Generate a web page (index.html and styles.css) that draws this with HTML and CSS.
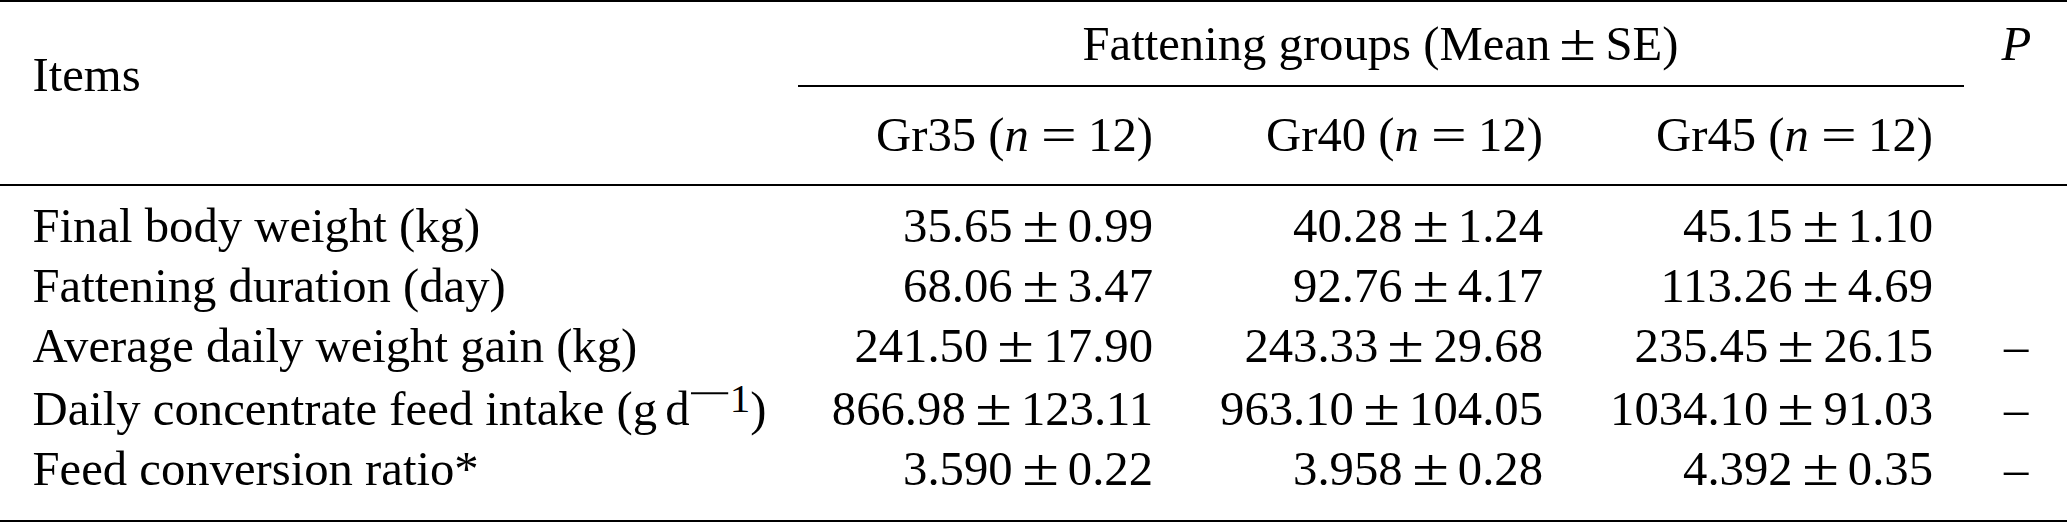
FILE: index.html
```html
<!DOCTYPE html>
<html lang="en">
<head>
<meta charset="utf-8">
<title>Fattening groups table</title>
<link rel="stylesheet" href="styles.css">
</head>
<body>
<div class="tbl">
  <div class="thead">
    <div class="cell left items">Items</div>
    <div class="cell grp">Fattening groups (Mean<span class="pm">±</span>SE)</div>
    <div class="cell ctr phead"><i>P</i></div>
    <div class="cell num sub">Gr35 (<i>n</i><span class="eq">=</span>12)</div>
    <div class="cell num sub">Gr40 (<i>n</i><span class="eq">=</span>12)</div>
    <div class="cell num sub">Gr45 (<i>n</i><span class="eq">=</span>12)</div>
    <div class="cell ctr sub"></div>
  </div>
  <div class="tbody">
    <div class="cell left">Final body weight (kg)</div>
    <div class="cell num">35.65<span class="pm">±</span>0.99</div>
    <div class="cell num">40.28<span class="pm">±</span>1.24</div>
    <div class="cell num">45.15<span class="pm">±</span>1.10</div>
    <div class="cell ctr"></div>

    <div class="cell left">Fattening duration (day)</div>
    <div class="cell num">68.06<span class="pm">±</span>3.47</div>
    <div class="cell num">92.76<span class="pm">±</span>4.17</div>
    <div class="cell num">113.26<span class="pm">±</span>4.69</div>
    <div class="cell ctr"></div>

    <div class="cell left">Average daily weight gain (kg)</div>
    <div class="cell num">241.50<span class="pm">±</span>17.90</div>
    <div class="cell num">243.33<span class="pm">±</span>29.68</div>
    <div class="cell num">235.45<span class="pm">±</span>26.15</div>
    <div class="cell ctr">–</div>

    <div class="cell left r4">Daily concentrate feed intake (g<span class="thin">d</span><span class="sup"><span class="minus">−</span>1</span>)</div>
    <div class="cell num r4">866.98<span class="pm">±</span>123.11</div>
    <div class="cell num r4">963.10<span class="pm">±</span>104.05</div>
    <div class="cell num r4">1034.10<span class="pm">±</span>91.03</div>
    <div class="cell ctr r4">–</div>

    <div class="cell left">Feed conversion ratio*</div>
    <div class="cell num">3.590<span class="pm">±</span>0.22</div>
    <div class="cell num">3.958<span class="pm">±</span>0.28</div>
    <div class="cell num">4.392<span class="pm">±</span>0.35</div>
    <div class="cell ctr">–</div>
  </div>
</div>
</body>
</html>
```

FILE: styles.css
```css
html, body { margin: 0; padding: 0; background: #fff; }
body { color: #000; }
.tbl {
  width: 2067px;
  display: flex;
  flex-direction: column;
  border-top: 2px solid #000;
  border-bottom: 2px solid #000;
}
.thead, .tbody {
  display: grid;
  grid-template-columns: 795.5px 390px 390px 390px 101.5px;
}
.thead { border-bottom: 2px solid #000; }
.tbody { padding: 10px 0 21px; }
.cell {
  font-family: "Liberation Serif", "Times New Roman", serif;
  font-size: 48.7px;
  line-height: 60px;
  padding: 0 32.5px;
  white-space: nowrap;
}
.left { text-align: left; }
.num { text-align: right; }
.ctr { text-align: center; padding: 0; }
.items { grid-row: 1 / span 2; padding-top: 42.6px; }
.grp {
  grid-column: 2 / span 3;
  margin: 0 2px;
  padding: 11.6px 0 11.4px;
  border-bottom: 2px solid #000;
  text-align: center;
}
.phead { padding-top: 11.6px; }
.sub { padding-top: 17.6px; padding-bottom: 19.4px; }
.r4 { padding-top: 3px; }
.pm {
  display: inline-block;
  font-size: 1.1em;
  line-height: 1;
  transform: scaleX(1.25);
  margin: 0 12.9px;
}
.eq {
  display: inline-block;
  transform: scaleX(1.3);
  margin: 0 0.326em;
}
.thin { margin-left: 0.17em; }
.sup {
  font-size: 41px;
  line-height: 0;
  vertical-align: 13px;
}
.minus {
  display: inline-block;
  transform: scaleX(1.95);
  margin: 0 8.5px;
  vertical-align: 5px;
}
```
